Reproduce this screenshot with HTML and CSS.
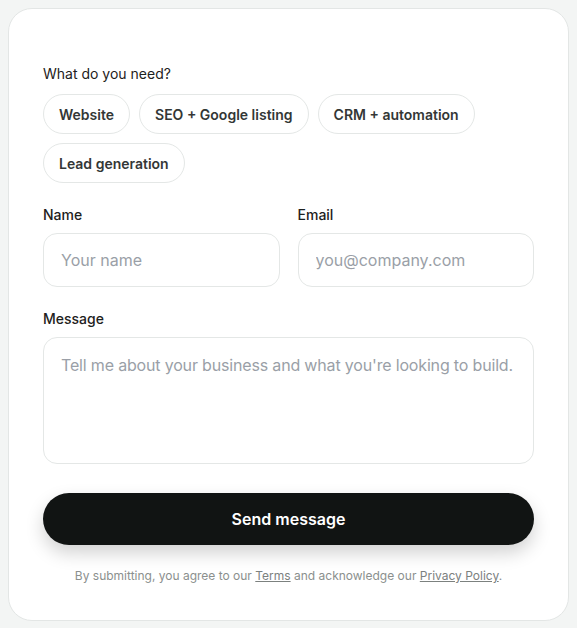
FILE: index.html
```html
<!DOCTYPE html>
<html>
<head>
    <title>Contact</title>
    <link rel="stylesheet" href="styles.css">
</head>
<body>
<div class="card">
    <form class="contactForm">
        <div class="field needField">
            <span class="label needLabel">What do you need?</span>
            <div class="chips">
                <button type="button" class="chip">Website</button>
                <button type="button" class="chip">SEO + Google listing</button>
                <button type="button" class="chip">CRM + automation</button>
                <button type="button" class="chip">Lead generation</button>
            </div>
        </div>

        <div class="row">
            <div class="field">
                <label class="label" for="name">Name</label>
                <input type="text" id="name" class="input" placeholder="Your name">
            </div>
            <div class="field">
                <label class="label" for="email">Email</label>
                <input type="email" id="email" class="input" placeholder="you@company.com">
            </div>
        </div>

        <div class="field messageField">
            <label class="label" for="message">Message</label>
            <textarea id="message" class="input textarea" placeholder="Tell me about your business and what you're looking to build."></textarea>
        </div>

        <button type="submit" class="send">Send message</button>

        <p class="legal">By submitting, you agree to our <a href="#">Terms</a> and acknowledge our <a href="#">Privacy Policy</a>.</p>
    </form>
</div>
</body>
</html>
```

FILE: styles.css
```css
body{
    margin: 8px;
    background-color: #f3f5f4;
    font-family: Inter, "Noto Sans", sans-serif;
    color: #1d2120;
}

.card{
    background-color: #ffffff;
    border: 1px solid #e3e6e5;
    border-radius: 24px;
    padding: 55px 34px 36px 34px;
}

.contactForm{
    display: flex;
    flex-direction: column;
}

.field{
    display: flex;
    flex-direction: column;
    gap: 8px;
    margin-bottom: 22px;
}

.label{
    font-size: 14px;
    line-height: 20px;
    font-weight: 500;
    color: #1d2120;
}

.needLabel{
    font-weight: 400;
}

.needField{
    gap: 10px;
    margin-bottom: 22px;
}

.chips{
    display: flex;
    flex-wrap: wrap;
    gap: 9px 9px;
}

.chip{
    font-family: inherit;
    font-size: 14px;
    font-weight: 600;
    color: #333736;
    background-color: #ffffff;
    border: 1px solid #e4e7e6;
    border-radius: 999px;
    height: 40px;
    padding: 0 15px;
    cursor: pointer;
}

.row{
    display: grid;
    grid-template-columns: 1fr 1fr;
    gap: 18px;
}

.input{
    box-sizing: border-box;
    width: 100%;
    height: 54px;
    font-family: inherit;
    font-size: 16px;
    color: #1d2120;
    border: 1px solid #e4e7e6;
    border-radius: 14px;
    padding: 0 17px;
    outline: none;
}

.input::placeholder{
    color: #9a9fa7;
}

.textarea{
    height: 127px;
    padding: 15px 2px 15px 17px;
    line-height: 24px;
    letter-spacing: -0.17px;
    resize: none;
    overflow: hidden;
}

.messageField{
    margin-bottom: 29px;
}

.send{
    height: 52px;
    border: none;
    border-radius: 999px;
    background-color: #111413;
    color: #ffffff;
    font-family: inherit;
    font-size: 16px;
    font-weight: 600;
    box-shadow: 0 8px 18px rgba(0, 0, 0, 0.18);
    cursor: pointer;
}

.legal{
    margin: 23px 0 0 0;
    text-align: center;
    font-size: 12px;
    line-height: 16px;
    color: #8b908e;
}

.legal a{
    color: #7c817f;
}
```
